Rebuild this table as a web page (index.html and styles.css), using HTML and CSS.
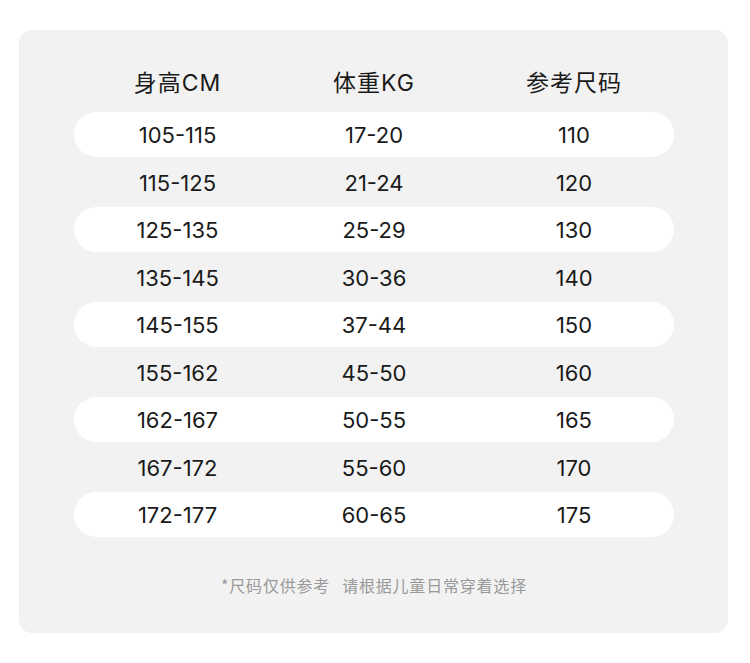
FILE: index.html
```html
<!DOCTYPE html>
<html lang="zh-CN">
<head>
<meta charset="utf-8">
<title>尺码表</title>
<link rel="stylesheet" href="styles.css">
</head>
<body>
<div class="card">
  <div class="row head">
    <div class="cell c1">身高CM</div>
    <div class="cell">体重KG</div>
    <div class="cell">参考尺码</div>
  </div>
  <div class="rows">
    <div class="row alt"><div class="cell c1">105-115</div><div class="cell">17-20</div><div class="cell">110</div></div>
    <div class="row"><div class="cell c1">115-125</div><div class="cell">21-24</div><div class="cell">120</div></div>
    <div class="row alt"><div class="cell c1">125-135</div><div class="cell">25-29</div><div class="cell">130</div></div>
    <div class="row"><div class="cell c1">135-145</div><div class="cell">30-36</div><div class="cell">140</div></div>
    <div class="row alt"><div class="cell c1">145-155</div><div class="cell">37-44</div><div class="cell">150</div></div>
    <div class="row"><div class="cell c1">155-162</div><div class="cell">45-50</div><div class="cell">160</div></div>
    <div class="row alt"><div class="cell c1">162-167</div><div class="cell">50-55</div><div class="cell">165</div></div>
    <div class="row"><div class="cell c1">167-172</div><div class="cell">55-60</div><div class="cell">170</div></div>
    <div class="row alt"><div class="cell c1">172-177</div><div class="cell">60-65</div><div class="cell">175</div></div>
  </div>
  <p class="note"><span>*尺码仅供参考</span><span class="gap">请根据儿童日常穿着选择</span></p>
</div>
</body>
</html>
```

FILE: styles.css
```css
html, body {
  margin: 0;
  padding: 0;
  background: #ffffff;
}

body {
  font-family: "Inter", "Noto Sans CJK SC", sans-serif;
  color: #1a1a1a;
}

.card {
  box-sizing: border-box;
  width: 709px;
  height: 603px;
  margin: 30px 0 0 19px;
  padding: 29px 54px 0 55px;
  background: #f2f2f2;
  border-radius: 13px;
}

.row {
  display: grid;
  grid-template-columns: 200px 200px 200px;
  height: 45px;
  align-items: center;
  border-radius: 22.5px;
}

.cell {
  box-sizing: border-box;
  height: 45px;
  padding-top: 2px;
  text-align: center;
  font-size: 22px;
  line-height: 43px;
  font-weight: 400;
}

.c1 {
  padding-left: 7px;
}

.head {
  margin-bottom: 8px;
}

.head .cell {
  font-size: 23px;
  font-weight: 400;
  letter-spacing: 1px;
  padding-top: 3px;
  line-height: 42px;
}

.rows {
  display: flex;
  flex-direction: column;
  gap: 2.5px;
}

.alt {
  background: #ffffff;
}

.note {
  margin: 38px 0 0;
  text-align: center;
  font-family: "Noto Sans CJK SC", sans-serif;
  font-size: 16px;
  line-height: 20px;
  letter-spacing: 0.8px;
  color: #999999;
}

.gap {
  margin-left: 12px;
}
```
